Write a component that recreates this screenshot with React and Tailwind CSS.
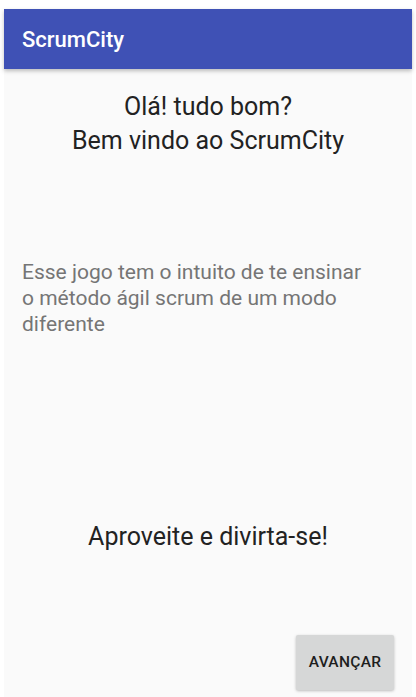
import React from 'react';

const App = () => {
  return (
    <div className="w-full h-[697px] bg-white pt-[9px] px-[4px] font-['Roboto',sans-serif]">
      <div className="h-[688px] bg-[#fafafa] flex flex-col">
        {/* App bar */}
        <div className="h-[60px] bg-[#3f51b5] flex items-center px-[18px] shadow-[0_2px_4px_rgba(0,0,0,0.25)] relative z-10">
          <span className="text-white text-[22px] font-medium">ScrumCity</span>
        </div>

        {/* Greeting */}
        <div className="mt-[21px] text-center text-[25px] leading-[34px] text-[#222]">
          <p>Olá! tudo bom?</p>
          <p>Bem vindo ao ScrumCity</p>
        </div>

        {/* Description */}
        <p className="mt-[101px] pl-[18px] w-[358px] text-[21px] leading-[26px] text-[#757575]">
          Esse jogo tem o intuito de te ensinar o método ágil scrum de um modo diferente
        </p>

        <p className="mt-[183px] text-center text-[25px] leading-[34px] text-[#222]">
          Aproveite e divirta-se!
        </p>

        <div className="flex justify-end mt-auto mb-[7px] mr-[18px]">
          <button className="w-[98px] h-[55px] bg-[#d6d7d7] rounded-[2px] shadow-[0_1px_3px_rgba(0,0,0,0.25)] text-[15.5px] font-medium text-[#1e1e1e] tracking-[0.3px]">
            AVANÇAR
          </button>
        </div>
      </div>
    </div>
  );
};

export default App;
